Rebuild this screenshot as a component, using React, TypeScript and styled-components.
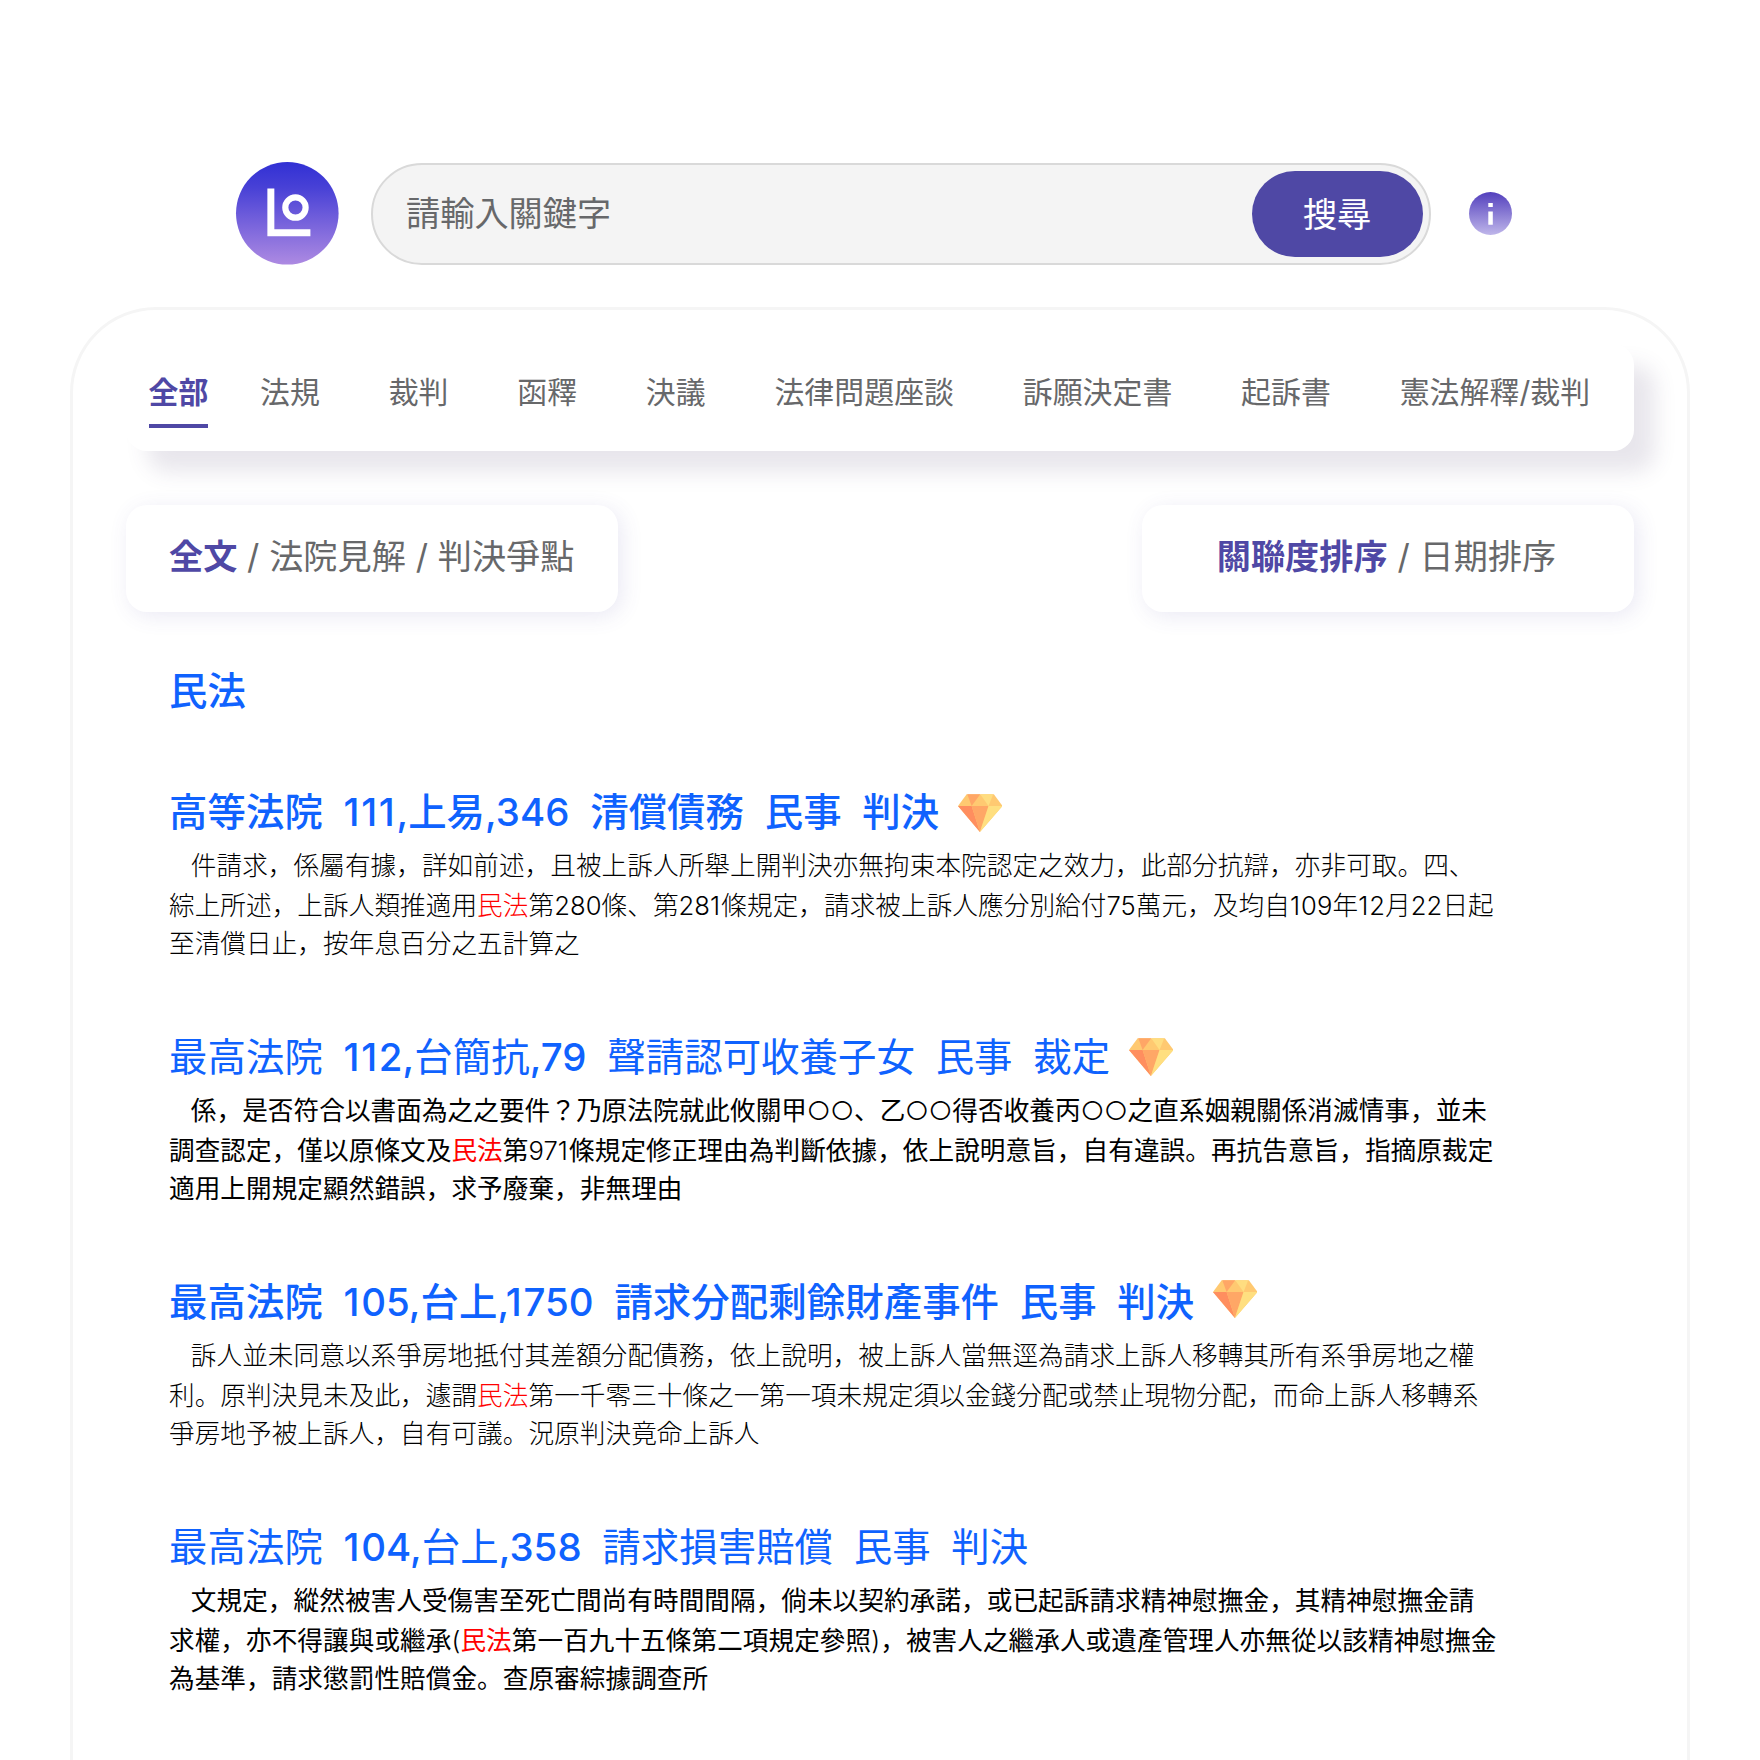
import React from "react";
import styled, { createGlobalStyle } from "styled-components";

const cjk = '"Noto Sans CJK JP", sans-serif';

const GlobalStyle = createGlobalStyle`
  *, *::before, *::after { box-sizing: border-box; }
  body { margin: 0; background: #fff; font-family: Inter, ${cjk}; letter-spacing: 0.08px; }
`;

const Page = styled.main`
  width: 1760px;
  height: 1760px;
  overflow: hidden;
  background: #fff;
`;

const TopBar = styled.header`
  display: flex;
  align-items: flex-start;
  height: 306px;
  padding: 162px 0 0 235.5px;
`;

const Logo = styled.svg`
  width: 102.6px;
  height: 102.6px;
  flex: none;
  margin-right: 33.4px;
  overflow: visible;
`;

const SearchBox = styled.form`
  display: flex;
  align-items: center;
  justify-content: space-between;
  width: 1059.6px;
  height: 102px;
  margin-top: 1px;
  padding: 0 6.5px 0 32.5px;
  border: 2px solid #d9d9d9;
  border-radius: 52px;
  background: #f4f4f4;
`;

const Placeholder = styled.span`
  color: #67686a;
  font-size: 34.13px;
  line-height: 50px;
`;

const SearchButton = styled.button`
  width: 171px;
  height: 86px;
  padding: 0 0 4px;
  border: 0;
  border-radius: 43px;
  background: #4f48a5;
  color: #fff;
  font: 400 34.13px Inter, ${cjk};
`;

const InfoIcon = styled.svg`
  width: 43px;
  height: 43px;
  flex: none;
  margin: 30px 0 0 37.5px;
`;

const Panel = styled.section`
  width: 1620px;
  height: 1700px;
  margin: 0.5px 0 0 70px;
  padding: 34px 53px 0;
  border: 3px solid #f5f5f5;
  border-radius: 86px;
`;

const Tabs = styled.nav`
  display: flex;
  align-items: flex-start;
  gap: 68.7px;
  height: 107px;
  padding: 26px 0 0 22.5px;
  border-radius: 21px;
  background: #fff;
  box-shadow: 21px 21px 21px rgba(79, 60, 110, 0.13);
`;

const Tab = styled.a<{ $active?: boolean }>`
  height: 58.5px;
  margin-right: ${(p) => (p.$active ? "-17px" : "0")};
  border-bottom: 4px solid ${(p) => (p.$active ? "#4f48a5" : "transparent")};
  color: ${(p) => (p.$active ? "#4f48a5" : "#67686a")};
  font-size: 29.87px;
  font-weight: ${(p) => (p.$active ? 700 : 400)};
  line-height: 44px;
  white-space: nowrap;
`;

const FilterRow = styled.div`
  display: flex;
  justify-content: space-between;
  margin-top: 54px;
`;

const FilterCard = styled.div<{ $indent: number }>`
  width: 492.3px;
  height: 107px;
  padding: 27px 0 0 ${(p) => p.$indent}px;
  border-radius: 21px;
  background: #fff;
  box-shadow: 4px 4px 21px rgba(79, 72, 165, 0.12);
  color: #67686a;
  font-size: 34.13px;
  line-height: 50px;
  white-space: pre;
`;

const ActiveFilter = styled.b`
  color: #4f48a5;
  font-weight: 700;
`;

const Results = styled.div`
  padding: 51px 0 0 43px;
`;

const Statute = styled.h2`
  margin: 0 0 65px;
  color: #0f62fe;
  font-size: 38.4px;
  font-weight: 500;
  line-height: 56px;
`;

const Article = styled.article`
  height: 245px;
`;

const Title = styled.h3`
  display: flex;
  margin: 0;
  color: #0f62fe;
  font-size: 38.4px;
  font-weight: 500;
  line-height: 56px;
  white-space: pre;
`;

const Run = styled.span<{ $weight: number; $tracking?: string }>`
  font-weight: ${(p) => p.$weight};
  letter-spacing: ${(p) => p.$tracking ?? "inherit"};
`;

const Gem = styled.svg<{ $top: number }>`
  width: 44.5px;
  height: 38px;
  margin: ${(p) => p.$top}px 0 0 18.5px;
`;

const Line = styled.p`
  margin: 0;
  height: 38.2px;
  color: #000;
  font-size: 25.6px;
  line-height: 38px;
  white-space: pre;

  &:first-of-type { height: 40.1px; margin-top: 7px; }
`;

const Keyword = styled.mark`
  background: none;
  color: #f00;
`;

/* Ideographs and Latin runs carry separate weights. The narrow "1" gets
   extra room, and a comma right before it is pulled in. */
function Mixed({ text, han, latin }: { text: string; han: number; latin: number }) {
  const runs = text.split(/(1+|,(?=1)|(?:[\x20-\x2b\x2d-\x30\x32-\x7e○]|,(?!1))+)/);
  const tracking = (i: number) => {
    if (runs[i][0] === "1") return "0.044em";
    if (runs[i] === "," && runs[i + 2]?.[0] === "1") return "-0.088em";
    return undefined;
  };
  return (
    <>
      {runs.map((run, i) =>
        run ? (
          <Run key={i} $weight={i % 2 ? latin : han} $tracking={tracking(i)}>{run}</Run>
        ) : null
      )}
    </>
  );
}

function GemIcon({ top }: { top: number }) {
  return (
    <Gem $top={top} viewBox="38 40.5 134 112" preserveAspectRatio="none">
      <path d="M64 41H146L172 76L104 152.500L38 76Z" fill="#ffc971" />
      <path d="M66 41H105L79 76Z" fill="#ffa666" />
      <path d="M105 41H144L130 76Z" fill="#ffdd80" />
      <path d="M38 76H79L104 152.500Z" fill="#ff8e5f" />
      <path d="M79 76H130L104 152.500Z" fill="#ffa766" />
      <path d="M130 76H172L104 152.500Z" fill="#ffdf80" />
    </Gem>
  );
}

interface Result {
  title: string;
  titleHan: number;
  lines: string[];
  han: number;
  latin: number;
  gemTop?: number;
}

const results: Result[] = [
  {
    title: "高等法院  111,上易,346  清償債務  民事  判決",
    titleHan: 500,
    han: 300,
    latin: 350,
    gemTop: 10,
    lines: [
      "   件請求，係屬有據，詳如前述，且被上訴人所舉上開判決亦無拘束本院認定之效力，此部分抗辯，亦非可取。四、",
      "綜上所述，上訴人類推適用{民法}第280條、第281條規定，請求被上訴人應分別給付75萬元，及均自109年12月22日起",
      "至清償日止，按年息百分之五計算之",
    ],
  },
  {
    title: "最高法院  112,台簡抗,79  聲請認可收養子女  民事  裁定",
    titleHan: 400,
    han: 400,
    latin: 300,
    gemTop: 9,
    lines: [
      "   係，是否符合以書面為之之要件？乃原法院就此攸關甲○○、乙○○得否收養丙○○之直系姻親關係消滅情事，並未",
      "調查認定，僅以原條文及{民法}第971條規定修正理由為判斷依據，依上說明意旨，自有違誤。再抗告意旨，指摘原裁定",
      "適用上開規定顯然錯誤，求予廢棄，非無理由",
    ],
  },
  {
    title: "最高法院  105,台上,1750  請求分配剩餘財產事件  民事  判決",
    titleHan: 500,
    han: 300,
    latin: 350,
    gemTop: 6,
    lines: [
      "   訴人並未同意以系爭房地抵付其差額分配債務，依上說明，被上訴人當無逕為請求上訴人移轉其所有系爭房地之權",
      "利。原判決見未及此，遽謂{民法}第一千零三十條之一第一項未規定須以金錢分配或禁止現物分配，而命上訴人移轉系",
      "爭房地予被上訴人，自有可議。況原判決竟命上訴人",
    ],
  },
  {
    title: "最高法院  104,台上,358  請求損害賠償  民事  判決",
    titleHan: 400,
    han: 400,
    latin: 300,
    lines: [
      "   文規定，縱然被害人受傷害至死亡間尚有時間間隔，倘未以契約承諾，或已起訴請求精神慰撫金，其精神慰撫金請",
      "求權，亦不得讓與或繼承({民法}第一百九十五條第二項規定參照)，被害人之繼承人或遺產管理人亦無從以該精神慰撫金",
      "為基準，請求懲罰性賠償金。查原審綜據調查所",
    ],
  },
];

const tabs = ["全部", "法規", "裁判", "函釋", "決議", "法律問題座談", "訴願決定書", "起訴書", "憲法解釋/裁判"];

export default function App() {
  return (
    <Page lang="ja">
      <GlobalStyle />
      <TopBar>
        <Logo viewBox="0 0 103 103">
          <defs>
            <linearGradient id="logoFill" x1="0" y1="0" x2="0" y2="1">
              <stop offset="0" stopColor="#3130d4" />
              <stop offset="0.25" stopColor="#4841d6" />
              <stop offset="1" stopColor="#ad8ae2" />
            </linearGradient>
          </defs>
          <circle cx="51.5" cy="51.5" r="51.5" fill="url(#logoFill)" />
          <path d="M35 26.500V71H74.700" fill="none" stroke="#fff" strokeWidth="7" />
          <circle cx="59.700" cy="45.700" r="10.200" fill="none" stroke="#fff" strokeWidth="6.200" />
        </Logo>
        <SearchBox>
          <Placeholder>請輸入關鍵字</Placeholder>
          <SearchButton type="button">搜尋</SearchButton>
        </SearchBox>
        <InfoIcon viewBox="0 0 43 43">
          <defs>
            <linearGradient id="infoFill" x1="0" y1="0" x2="0" y2="1">
              <stop offset="0" stopColor="#5340bd" />
              <stop offset="1" stopColor="#bfb6ea" />
            </linearGradient>
          </defs>
          <circle cx="21.500" cy="21.500" r="21.500" fill="url(#infoFill)" />
          <path d="M19.300 11h4.500v4h-4.500zM19.300 19.500h4.500v13.200h-4.500z" fill="#fff" />
        </InfoIcon>
      </TopBar>
      <Panel>
        <Tabs>
          {tabs.map((t, i) => (
            <Tab key={t} $active={i === 0}>{t}</Tab>
          ))}
        </Tabs>
        <FilterRow>
          <FilterCard $indent={43}>
            <ActiveFilter>全文</ActiveFilter> / 法院見解 / 判決爭點
          </FilterCard>
          <FilterCard $indent={75}>
            <ActiveFilter>關聯度排序</ActiveFilter> / 日期排序
          </FilterCard>
        </FilterRow>
        <Results>
          <Statute>民法</Statute>
          {results.map((r) => (
            <Article key={r.title}>
              <Title>
                <Mixed text={r.title} han={r.titleHan} latin={500} />
                {r.gemTop !== undefined && <GemIcon top={r.gemTop} />}
              </Title>
              {r.lines.map((line) => (
                <Line key={line}>
                  {line.split(/[{}]/).map((part, i) =>
                    i % 2 ? (
                      <Keyword key={i}><Mixed text={part} han={r.han} latin={r.latin} /></Keyword>
                    ) : (
                      <Mixed key={i} text={part} han={r.han} latin={r.latin} />
                    )
                  )}
                </Line>
              ))}
            </Article>
          ))}
        </Results>
      </Panel>
    </Page>
  );
}
